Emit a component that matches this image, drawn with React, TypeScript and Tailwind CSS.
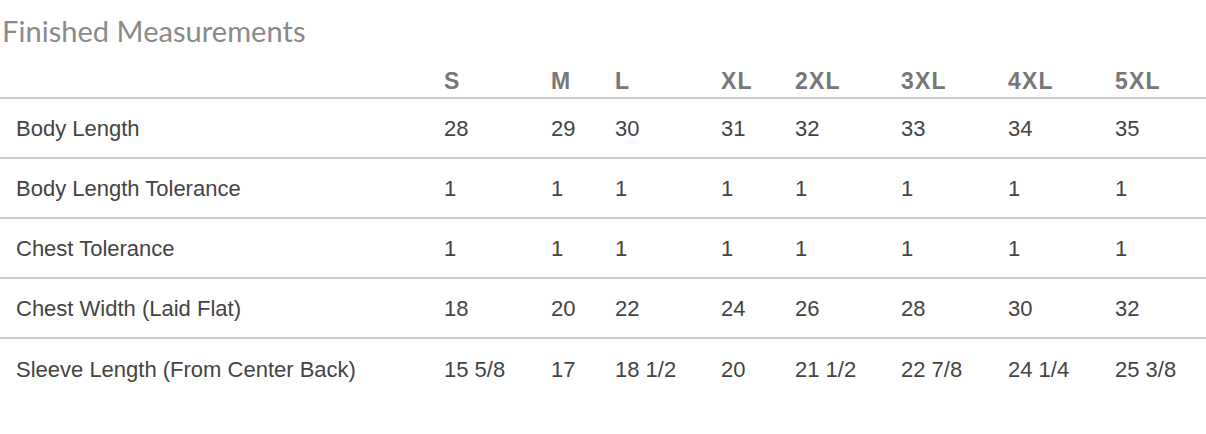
import React from "react";

const sizes = ["S", "M", "L", "XL", "2XL", "3XL", "4XL", "5XL"];
const rows: [string, string[]][] = [
  ["Body Length", ["28", "29", "30", "31", "32", "33", "34", "35"]],
  ["Body Length Tolerance", ["1", "1", "1", "1", "1", "1", "1", "1"]],
  ["Chest Tolerance", ["1", "1", "1", "1", "1", "1", "1", "1"]],
  ["Chest Width (Laid Flat)", ["18", "20", "22", "24", "26", "28", "30", "32"]],
  [
    "Sleeve Length (From Center Back)",
    ["15 5/8", "17", "18 1/2", "20", "21 1/2", "22 7/8", "24 1/4", "25 3/8"],
  ],
];

const grid =
  "grid grid-cols-[428px_107px_64px_106px_74px_106px_107px_107px_1fr]";

export default function App() {
  return (
    <div className="w-[1206px] h-[434px] bg-white overflow-hidden">
      <div
        className="pt-[13px] pl-[2px] text-[29px] leading-[35px] text-[#8a8a8a] h-[51px] tracking-[0.05px]"
        style={{ fontFamily: "Lato, 'Noto Sans', sans-serif" }}
      >
        Finished Measurements
      </div>
      <div
        className={`${grid} h-[48px] items-end pb-[3px] border-b-2 border-[#cccccc] text-[23px] leading-[26px] font-bold text-[#777777] tracking-[1.2px]`}
        style={{ fontFamily: "'Liberation Sans', Arial, sans-serif" }}
      >
        <div className="pl-4" />
        {sizes.map((s) => (
          <div key={s} className="pl-4">
            {s}
          </div>
        ))}
      </div>
      {rows.map(([label, vals], i) => (
        <div
          key={label}
          className={`${grid} h-[60px] items-center pt-[1px] text-[22px] leading-[26px] text-[#444444] ${
            i < rows.length - 1 ? "border-b-2 border-[#cccccc]" : ""
          }`}
          style={{ fontFamily: "'Liberation Sans', Arial, sans-serif" }}
        >
          <div className="pl-4 whitespace-nowrap">{label}</div>
          {vals.map((v, j) => (
            <div key={j} className="pl-4 whitespace-pre">
              {v}
            </div>
          ))}
        </div>
      ))}
    </div>
  );
}
